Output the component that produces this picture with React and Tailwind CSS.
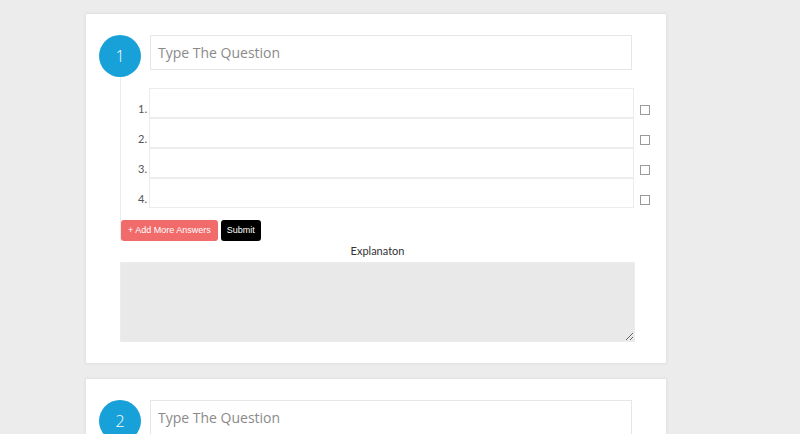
const answers = [1, 2, 3, 4];

const QuestionCard = ({ num, full }) => {
  return (
    <div className="ml-[85px] w-[582px] bg-white border border-[#e3e3e3] shadow-[0_0_2px_rgba(0,0,0,0.06)] pt-[21px] pl-[13px] pb-[21px]">
      {/* question row */}
      <div className="flex items-start">
        <div className="w-[42px] h-[42px] rounded-full bg-[#18a0d8] flex items-center justify-center text-white text-[16px] font-light font-['Open_Sans',sans-serif]">
          {num}
        </div>
        <input
          type="text"
          placeholder="Type The Question"
          className="ml-[9px] w-[482px] h-[35px] border border-[#e6e6e6] px-[7px] text-[14px] text-[#555] placeholder:text-[#8a8a8a] font-['Open_Sans',sans-serif] outline-none"
        />
      </div>

      {full && (
        <>
          <div className="ml-[21px] border-l border-[#ececec] pt-[11px]">
            {answers.map((a) => (
              <div key={a} className="flex items-end h-[30px]">
                <span className="w-[26px] text-right text-[11px] text-[#555] pb-[1px] font-['Lato',sans-serif]">
                  {a}.
                </span>
                <input
                  type="text"
                  className="ml-[2px] w-[485px] h-[30px] border border-[#ececec] outline-none"
                />
                <span className="ml-[6px] mb-[3px] w-[10px] h-[10px] border border-[#9a9a9a] bg-white"></span>
              </div>
            ))}
            <div className="flex gap-[3px] pt-[12px]">
              <button className="h-[21px] px-[7px] rounded-[3px] bg-[#f26b6b] text-white text-[9px] font-['Liberation_Sans',sans-serif]">
                + Add More Answers
              </button>
              <button className="h-[21px] px-[6px] rounded-[3px] bg-black text-white text-[9px] font-['Liberation_Sans',sans-serif]">
                Submit
              </button>
            </div>
          </div>
          <div className="ml-[21px] w-[515px]">
            <p className="text-center text-[11px] text-[#333] pt-[3px] pb-[5px] leading-[13px] font-['Lato',sans-serif]">
              Explanaton
            </p>
            <textarea className="block w-[515px] h-[80px] bg-[#e9e9e9] border border-[#ececec] outline-none"></textarea>
          </div>
        </>
      )}
    </div>
  );
};

const App = () => {
  return (
    <div className="min-h-screen bg-[#ececec] pt-[13px] pb-[20px]">
      <QuestionCard num={1} full />
      <div className="h-[14px]"></div>
      <QuestionCard num={2} full />
    </div>
  );
};

export default App;
